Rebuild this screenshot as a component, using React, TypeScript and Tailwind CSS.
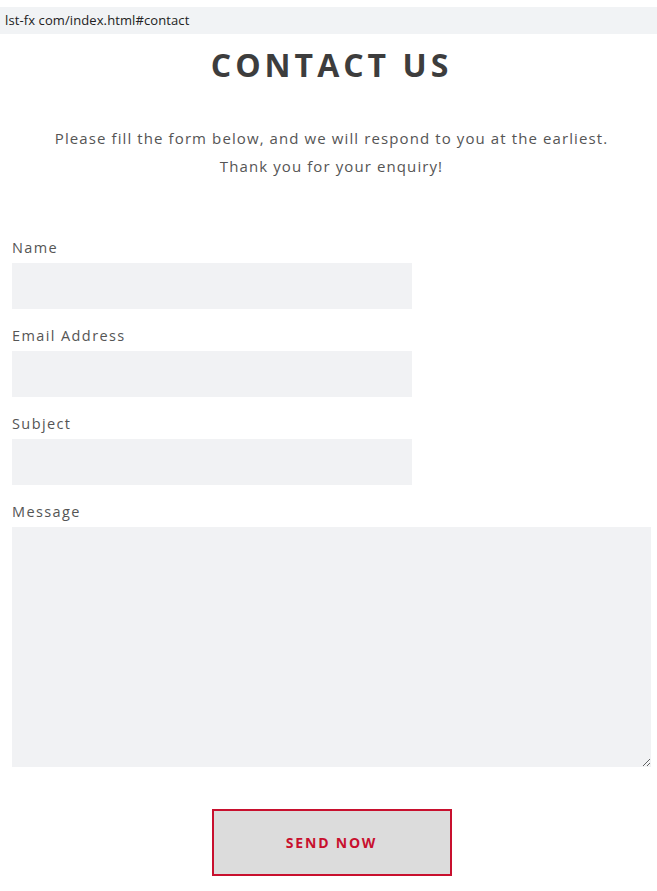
import React from "react";

const Label = ({ children }: { children: React.ReactNode }) => (
  <label className="text-[14.5px] leading-[20px] tracking-[1.4px] text-[#555] pt-[1px]">{children}</label>
);

const Field = ({ label }: { label: string }) => (
  <div className="flex flex-col">
    <Label>{label}</Label>
    <input className="mt-[5px] h-[46px] w-[400px] bg-[#f1f2f4] outline-none" />
  </div>
);

export default function App() {
  return (
    <div className="w-[657px] h-[891px] bg-white" style={{ fontFamily: "'Open Sans', 'Noto Sans', sans-serif" }}>
      <div className="h-[7px]" />
      <div className="h-[27px] bg-[#f1f3f5] pl-[5px] flex items-center text-[13px] text-[#222] tracking-[0.1px]">
        lst-fx com/index.html#contact
      </div>
      <h1 className="mt-[15px] pl-[6px] text-center text-[32px] leading-[32px] font-bold tracking-[4px] text-[#3d3d3d]">
        CONTACT US
      </h1>
      <div className="mt-[43px] pl-[6px] text-center text-[15px] leading-[28px] tracking-[1.1px] text-[#555]">
        <p>Please fill the form below, and we will respond to you at the earliest.</p>
        <p>Thank you for your enquiry!</p>
      </div>
      <form className="mt-[57px] px-[12px] flex flex-col gap-[16px]">
        <Field label="Name" />
        <Field label="Email Address" />
        <Field label="Subject" />
        <div className="flex flex-col">
          <Label>Message</Label>
          <textarea className="mt-[5px] h-[240px] w-[639px] bg-[#f1f2f4] outline-none" />
        </div>
        <div className="mt-[26px] w-[639px] flex justify-center">
          <button type="button" className="w-[240px] h-[67px] border-2 border-[#c8102e] bg-[#dcdcdc] text-[#c8102e] text-[14px] font-bold tracking-[1.8px]">
            SEND NOW
          </button>
        </div>
      </form>
    </div>
  );
}
